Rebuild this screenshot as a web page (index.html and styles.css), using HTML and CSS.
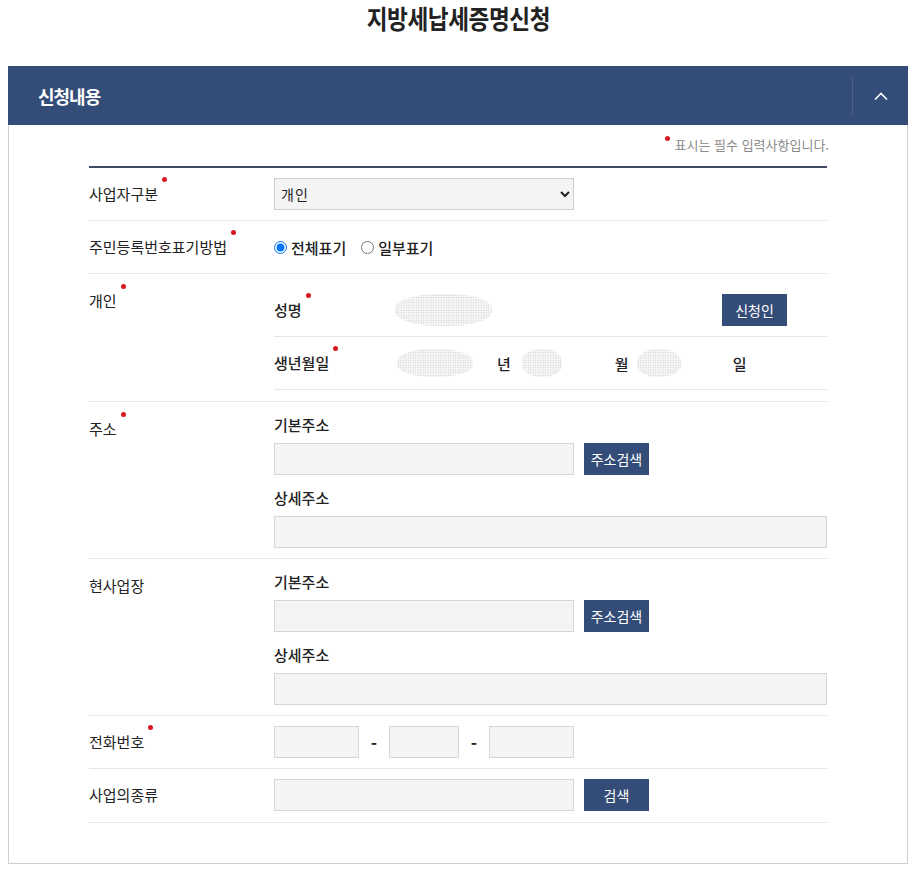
FILE: index.html
```html
<!DOCTYPE html>
<html lang="ko">
<head>
<meta charset="utf-8">
<title>지방세납세증명신청</title>
<link rel="stylesheet" href="styles.css">
</head>
<body>
<div class="page">
  <h1 class="page-title"><span class="page-title-text">지방세납세증명신청</span></h1>

  <section class="panel">
    <div class="panel-head">
      <h2 class="panel-title">신청내용</h2>
      <button class="toggle" type="button" aria-label="접기">
        <svg width="16" height="10" viewBox="0 0 16 10"><path d="M2 8.5 L8 2.5 L14 8.5" fill="none" stroke="#fff" stroke-width="1.6"/></svg>
      </button>
    </div>

    <div class="panel-body">
      <p class="req-note"><span class="req-dot"></span>표시는 필수 입력사항입니다.</p>

      <div class="form">
        <div class="row">
          <div class="label"><span class="req-label">사업자구분</span></div>
          <div class="field">
            <select class="select"><option>개인</option><option>법인</option></select>
          </div>
        </div>

        <div class="row">
          <div class="label"><span class="req-label">주민등록번호표기방법</span></div>
          <div class="field radios">
            <label class="radio"><input type="radio" name="disp" checked>전체표기</label>
            <label class="radio"><input type="radio" name="disp">일부표기</label>
          </div>
        </div>

        <div class="row row-top">
          <div class="label"><span class="req-label">개인</span></div>
          <div class="field sub-table">
            <div class="sub-row">
              <div class="sub-label"><span class="req-label">성명</span></div>
              <div class="sub-field">
                <span class="blur blur-name"></span>
                <button class="btn btn-applicant" type="button">신청인</button>
              </div>
            </div>
            <div class="sub-row">
              <div class="sub-label"><span class="req-label">생년월일</span></div>
              <div class="sub-field">
                <span class="blur blur-year"></span>
                <span class="unit unit-year">년</span>
                <span class="blur blur-month"></span>
                <span class="unit unit-month">월</span>
                <span class="blur blur-day"></span>
                <span class="unit unit-day">일</span>
              </div>
            </div>
          </div>
        </div>

        <div class="row row-top">
          <div class="label"><span class="req-label">주소</span></div>
          <div class="field addr">
            <div class="addr-label">기본주소</div>
            <div class="inline">
              <input class="input w300" type="text">
              <button class="btn btn-search" type="button">주소검색</button>
            </div>
            <div class="addr-label addr-label-2">상세주소</div>
            <input class="input full" type="text">
          </div>
        </div>

        <div class="row row-top">
          <div class="label"><span class="plain-label">현사업장</span></div>
          <div class="field addr">
            <div class="addr-label">기본주소</div>
            <div class="inline">
              <input class="input w300" type="text">
              <button class="btn btn-search" type="button">주소검색</button>
            </div>
            <div class="addr-label addr-label-2">상세주소</div>
            <input class="input full" type="text">
          </div>
        </div>

        <div class="row">
          <div class="label"><span class="req-label">전화번호</span></div>
          <div class="field inline">
            <input class="input w85" type="text">
            <span class="dash">-</span>
            <input class="input w70" type="text">
            <span class="dash">-</span>
            <input class="input w85" type="text">
          </div>
        </div>

        <div class="row row-last">
          <div class="label"><span class="plain-label">사업의종류</span></div>
          <div class="field inline">
            <input class="input w300" type="text">
            <button class="btn btn-search" type="button">검색</button>
          </div>
        </div>
      </div>
    </div>
  </section>
</div>
</body>
</html>
```

FILE: styles.css
```css
* { box-sizing: border-box; }

html, body {
  margin: 0;
  padding: 0;
  background: #fff;
}

body {
  font-family: "Noto Sans CJK KR", "Noto Sans", sans-serif;
  color: #222;
  font-size: 15px;
}

.page {
  padding: 0 7px 8px 8px;
}

.page-title {
  margin: 0 0 30px;
  height: 36px;
  line-height: 36px;
  text-align: center;
  font-size: 26px;
  font-weight: 700;
  color: #222;
}

.page-title-text {
  display: inline-block;
  transform: scaleX(0.87);
  letter-spacing: -0.5px;
}

.panel {
  width: 900px;
}

.panel-head {
  height: 59px;
  background: #344c78;
  display: flex;
  align-items: center;
  justify-content: space-between;
  padding-left: 30px;
}

.panel-title {
  margin: 0;
  color: #fff;
  font-size: 18px;
  font-weight: 700;
  letter-spacing: -1px;
}

.toggle {
  width: 56px;
  height: 40px;
  border: 0;
  border-left: 1px solid #4b5f87;
  background: transparent;
  padding: 0;
  display: flex;
  align-items: center;
  justify-content: center;
  cursor: pointer;
}

.panel-body {
  border: 1px solid #cfcfcf;
  border-top: 0;
  padding: 0 80px 40px;
}

.req-note {
  margin: 0 -2px 0 0;
  padding-top: 10px;
  height: 41px;
  line-height: 20px;
  text-align: right;
  font-size: 13px;
  color: #8a8a8a;
}

.req-dot {
  display: inline-block;
  width: 5px;
  height: 5px;
  border-radius: 50%;
  background: #d8181f;
  vertical-align: 9px;
  margin-right: 5px;
}

.form {
  border-top: 2px solid #3d4a65;
}

.row {
  display: flex;
  align-items: center;
  padding: 10px 0;
  border-bottom: 1px solid #e6e6e6;
}

.row-top {
  align-items: flex-start;
}

.row-last {
  padding-bottom: 11px;
}

.label {
  width: 185px;
  flex: none;
  line-height: 22px;
  font-size: 15px;
  color: #222;
}

.row-top .label {
  padding-top: 6px;
}

.req-label, .plain-label {
  position: relative;
  display: inline-block;
}

.req-label::after {
  content: "";
  position: absolute;
  right: -9px;
  top: -6px;
  width: 5px;
  height: 5px;
  border-radius: 50%;
  background: #d8181f;
}

.field {
  flex: 1;
  min-width: 0;
}

.select {
  width: 300px;
  height: 32px;
  border: 1px solid #cfcfcf;
  background: #f4f4f4;
  font-family: "Noto Sans CJK KR", "Noto Sans", sans-serif;
  font-size: 14px;
  letter-spacing: 1px;
  color: #222;
  padding: 0 2px;
  border-radius: 0;
}

.radios {
  display: flex;
  align-items: center;
  height: 32px;
}

.radio {
  display: inline-flex;
  align-items: center;
  font-size: 15px;
  font-weight: 500;
  color: #222;
  margin-right: 15px;
}

.radio input {
  margin: 0 4px 0 0;
  width: 13px;
  height: 13px;
}

.sub-table {
  padding-bottom: 1px;
}

.sub-row {
  display: flex;
  align-items: center;
  padding: 10px 0;
  border-bottom: 1px solid #e6e6e6;
}

.sub-label {
  width: 121px;
  flex: none;
  line-height: 22px;
  font-size: 15px;
  font-weight: 500;
  color: #222;
}

.sub-field {
  display: flex;
  align-items: center;
  height: 32px;
}

.blur {
  display: inline-block;
  flex: none;
  border-radius: 45%;
  background-color: #fafafa;
  background-image: radial-gradient(circle, #d2d2d2 0.6px, transparent 1px);
  background-size: 2.5px 2.5px;
}

.blur-name { width: 97px; height: 32px; }
.blur-year { width: 76px; height: 28px; margin-left: 2px; }
.blur-month { width: 40px; height: 28px; margin-left: 11px; }
.blur-day { width: 44px; height: 28px; margin-left: 8px; }

.unit {
  font-size: 15px;
  font-weight: 500;
  color: #222;
}
.unit-year { margin-left: 24px; }
.unit-month { margin-left: 53px; }
.unit-day { margin-left: 52px; }

.btn {
  height: 32px;
  width: 65px;
  border: 0;
  border-radius: 0;
  background: #344c78;
  color: #fff;
  font-family: "Noto Sans CJK KR", "Noto Sans", sans-serif;
  font-size: 14px;
  padding: 0;
  cursor: pointer;
}

.btn-applicant { margin-left: 230px; }
.btn-search { margin-left: 10px; }

.addr {
  display: flex;
  flex-direction: column;
}

.addr-label {
  line-height: 26px;
  font-size: 15px;
  font-weight: 500;
  color: #222;
  margin-bottom: 5px;
}

.addr-label-2 { margin-top: 10px; }

.inline {
  display: flex;
  align-items: center;
}

.input {
  height: 32px;
  border: 1px solid #d6d6d6;
  background: #f4f4f4;
  border-radius: 0;
  padding: 0 8px;
  font-family: "Noto Sans CJK KR", "Noto Sans", sans-serif;
  font-size: 13px;
}

.w300 { width: 300px; }
.w85 { width: 85px; }
.w70 { width: 70px; }
.full { width: 100%; }

.dash {
  width: 30px;
  text-align: center;
  font-size: 17px;
  font-weight: 700;
  color: #222;
}
```
